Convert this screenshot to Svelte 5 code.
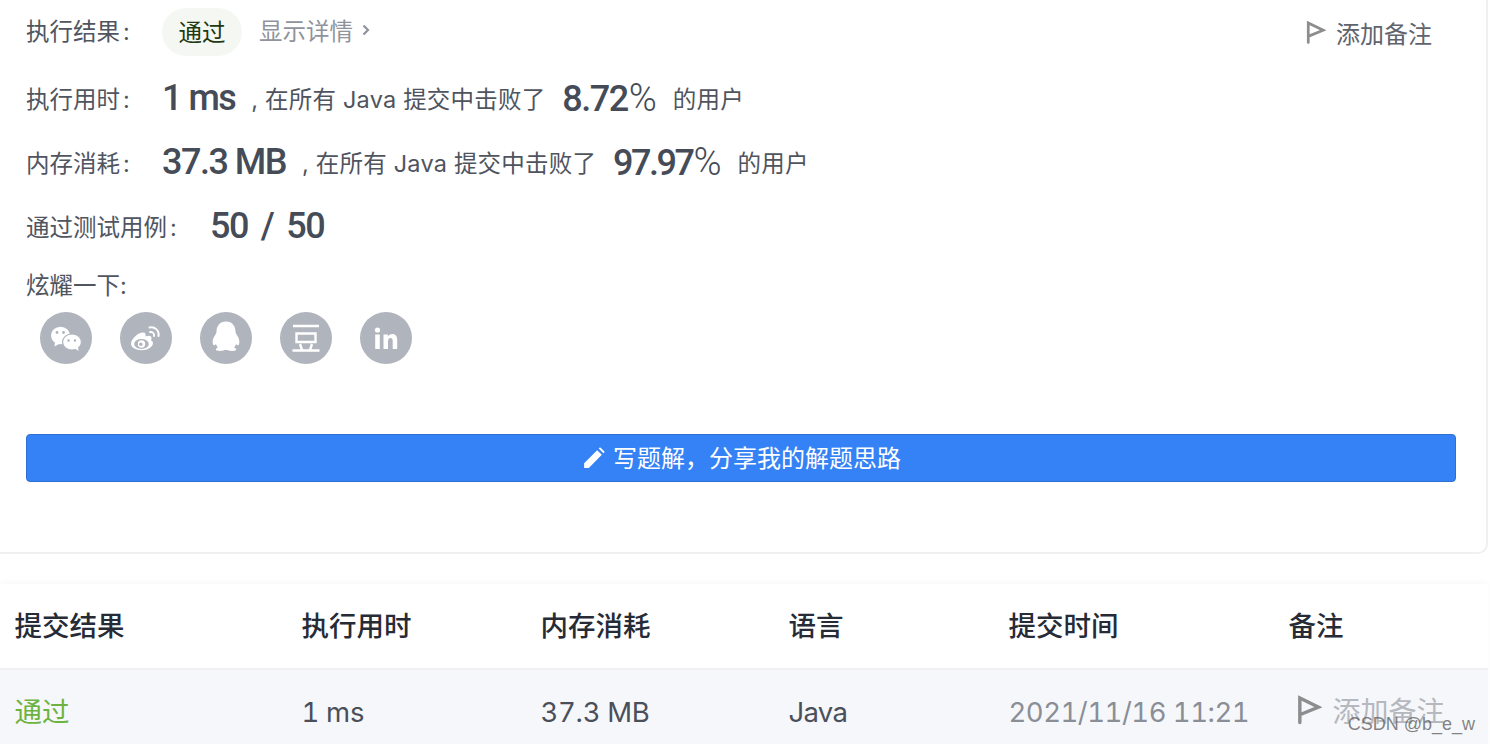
<script lang="ts">
  // 提交详情页：上方结果卡片 + 下方提交记录表
  const stats = [
    { label: "执行用时", value: "1 ms", percent: "8.72" },
    { label: "内存消耗", value: "37.3 MB", percent: "97.97" }
  ];
</script>

{#snippet flag(cls: string)}
  <svg class={cls} viewBox="0 0 22 26" aria-hidden="true">
    <path d="M2.5 24V2.5L19 10.5 3 17" fill="none" stroke="currentColor" stroke-width="3" stroke-linejoin="miter" stroke-linecap="round" />
  </svg>
{/snippet}

<div class="page">
  <section class="card">
    <div class="row result">
      <span class="label">执行结果<i>:</i></span>
      <span class="pill">通过</span>
      <span class="details">显示详情
        <svg viewBox="0 0 10 14" class="chevron"><path d="M2.5 2.5 7 7l-4.500 4.500" fill="none" stroke="currentColor" stroke-width="2.200" /></svg>
      </span>
      <span class="note">{@render flag("flag")}添加备注</span>
    </div>

    {#each stats as s}
      <div class="row stat">
        <span class="label">{s.label}<i>:</i></span>
        <strong class="big">{s.value}</strong>
        <span class="text">, 在所有 Java 提交中击败了</span>
        <strong class="big pct">{s.percent}<span class="sign">%</span></strong>
        <span class="text">的用户</span>
      </div>
    {/each}

    <div class="row cases">
      <span class="label">通过测试用例<i>:</i></span>
      <strong class="big">50 / 50</strong>
    </div>

    <div class="share-title">炫耀一下:</div>
    <div class="share">
      <span class="circle">
        <svg viewBox="0 0 52 52">
          <ellipse cx="20.500" cy="23.500" rx="9.500" ry="8.800" fill="#fff" />
          <path d="M15 30l-.5 4.500 5.500-3z" fill="#fff" />
          <ellipse cx="32" cy="30" rx="9.500" ry="8" fill="#fff" stroke="#b0b4bd" stroke-width="1.200" />
          <path d="M35 36.500l3.500 2.500-.5-4.500z" fill="#fff" />
          <circle cx="17" cy="20.500" r="1.400" fill="#b0b4bd" />
          <circle cx="23.500" cy="20.500" r="1.400" fill="#b0b4bd" />
          <circle cx="28.500" cy="28.500" r="1.200" fill="#b0b4bd" />
          <circle cx="35" cy="28.500" r="1.200" fill="#b0b4bd" />
        </svg>
      </span>
      <span class="circle">
        <svg viewBox="0 0 52 52">
          <path d="M11 32c0-5 7-11.500 12-11.500 2.500 0 3 1.700 2.500 4 3.500-1.300 6-.8 6 1.700 0 .8 0 1.300-.8 2 1.500.5 2.300 1.500 2.300 3 0 3.500-5.500 7-11 7-5.500 0-11-2.500-11-6.200z" fill="#fff" />
          <ellipse cx="21.500" cy="32" rx="7.300" ry="5" fill="#b0b4bd" />
          <circle cx="21.500" cy="32" r="3.700" fill="#fff" />
          <circle cx="20.800" cy="32.300" r="1.700" fill="#b0b4bd" />
          <path d="M29.500 15.500c5-1.500 10 3 9 8.500M30 20c2.500-.5 4.500 1.500 4 4" fill="none" stroke="#fff" stroke-width="2" stroke-linecap="round" />
        </svg>
      </span>
      <span class="circle">
        <svg viewBox="0 0 52 52">
          <path d="M26 9.500c6.500 0 9.500 5 9.500 10 0 1 .3 2 1 3 2.500 3 3.500 7 2.500 10-.5 1.200-1.800 1-3-.500-.3 1.500-1 2.500-2 3.500 1.500.5 2.500 1.500 2 2.500-.5 1-5 1.200-7.500.500-.7-.5-1.500-.6-2.500-.6s-1.800.1-2.500.6c-2.500.7-7 .5-7.500-.5-.5-1 .5-2 2-2.500-1-1-1.700-2-2-3.500-1.200 1.500-2.500 1.700-3 .5-1-3 0-7 2.500-10 .7-1 1-2 1-3 0-5 3-10 9.500-10z" fill="#fff" />
        </svg>
      </span>
      <span class="circle">
        <svg viewBox="0 0 52 52">
          <path d="M13 14h26M16.500 21.500h19v8.500h-19zM20 32l2 6M32 32l-2 6M12.500 38.500h27" fill="none" stroke="#fff" stroke-width="2.400" />
        </svg>
      </span>
      <span class="circle">
        <svg viewBox="0 0 52 52">
          <circle cx="17.500" cy="18" r="2.600" fill="#fff" />
          <path d="M15.200 22.500h4.600V37h-4.600zM23.500 22.500h4.300v2c1-1.500 2.500-2.400 4.400-2.400 3.500 0 5 2.200 5 6V37h-4.500v-8c0-2-.6-3-2.100-3s-2.600 1.200-2.600 3.200V37h-4.500z" fill="#fff" />
        </svg>
      </span>
    </div>

    <button class="solution" type="button">
      <svg viewBox="0 0 24 24" class="pencil"><path d="M3 21v-4.500L15.500 4l4.500 4.500L7.500 21zM17 2.500l1-1 .6-.1 3.900 3.900v.7l-1 1z" fill="#fff" /></svg>
      写题解，分享我的解题思路
    </button>
  </section>

  <section class="table">
    <div class="tr head">
      <span>提交结果</span><span>执行用时</span><span>内存消耗</span><span>语言</span><span>提交时间</span><span>备注</span>
    </div>
    <div class="tr body">
      <span class="ok">通过</span>
      <span class="num">1 ms</span>
      <span class="num">37.3 MB</span>
      <span class="num lang">Java</span>
      <span class="num time">2021/11/16 11:21</span>
      <span class="add">{@render flag("flag big-flag")}添加备注</span>
    </div>
  </section>

  <div class="watermark">CSDN @b_e_w</div>
</div>

<style>
  :global(body) {
    margin: 0;
    background: #fff;
  }

  .page {
    position: relative;
    width: 1490px;
    height: 744px;
    overflow: hidden;
    font-family: Inter, "Noto Sans CJK SC", sans-serif;
    color: #4a4f5a;
  }

  .card {
    box-sizing: border-box;
    width: 1488px;
    height: 554px;
    padding: 8px 54px 0 26px;
    background: #fff;
    border: 2px solid #f0f0f0;
    border-width: 0 2px 2px 0;
    border-radius: 0 0 10px 0;
  }

  .row {
    display: flex;
    align-items: center;
  }

  .label {
    width: 136px;
    font-size: 23.500px;
    color: #50555f;
    flex: none;
  }

  .label i {
    font-style: normal;
    margin-left: 3px;
  }

  .result {
    height: 48px;
  }

  .result .label {
    padding-bottom: 5px;
  }

  .pill {
    width: 80px;
    height: 48px;
    line-height: 49px;
    border-radius: 24px;
    background: #f5f8f2;
    color: #1f3a12;
    text-align: center;
    font-size: 23.500px;
  }

  .details {
    display: flex;
    align-items: center;
    margin-left: 17px;
    padding-bottom: 4px;
    font-size: 23.500px;
    color: #8f939c;
  }

  .chevron {
    width: 10px;
    height: 14px;
    margin-left: 8px;
  }

  .note {
    display: flex;
    align-items: center;
    margin-left: auto;
    font-size: 24px;
    color: #5f636d;
  }

  .flag {
    width: 20px;
    height: 25px;
    margin-right: 10px;
    color: #8d8d8d;
  }

  .big-flag {
    width: 25px;
    height: 32px;
    margin-right: 11px;
  }

  .stat {
    height: 64px;
  }

  .stat:nth-of-type(2) {
    margin-top: 10px;
  }

  .big {
    font-family: Roboto, "Noto Sans", sans-serif;
    font-size: 36px;
    font-weight: 500;
    letter-spacing: -1.500px;
    color: #454b57;
    white-space: pre;
  }

  .text {
    font-size: 23.500px;
    letter-spacing: 0.200px;
    margin-left: 16px;
    color: #4f545e;
    white-space: pre;
  }

  .pct {
    margin-left: 17px;
  }

  .stat:nth-of-type(3) .pct {
    letter-spacing: -2.500px;
  }

  .sign {
    font-weight: 300;
    font-size: 38px;
    letter-spacing: 0;
    margin-left: 1px;
  }

  .cases {
    height: 64px;
  }

  .cases .label {
    width: 184px;
  }

  .cases .big {
    word-spacing: 5.500px;
  }

  .share-title {
    margin-top: 10px;
    height: 36px;
    line-height: 36px;
    font-size: 23.500px;
    color: #50555f;
  }

  .share {
    display: flex;
    gap: 28px;
    padding: 8px 0 0 14px;
  }

  .circle {
    width: 52px;
    height: 52px;
    border-radius: 50%;
    background: #b0b4bd;
  }

  .circle svg {
    display: block;
    width: 52px;
    height: 52px;
  }

  .solution {
    display: flex;
    align-items: center;
    justify-content: center;
    box-sizing: border-box;
    width: 1430px;
    height: 48px;
    margin-top: 70px;
    padding: 0 0 4px;
    background: #3582f6;
    border: 1px solid #2f6fd0;
    border-radius: 4px;
    color: #fff;
    font: inherit;
    font-size: 24px;
  }

  .pencil {
    width: 25px;
    height: 25px;
    margin: 4px 7px 0 0;
  }

  .table {
    width: 1488px;
    margin-top: 30px;
    box-shadow: 0 -2px 6px rgba(0, 0, 0, 0.03);
  }

  .tr {
    display: grid;
    grid-template-columns: 287px 239px 248px 220px 280px 1fr;
    align-items: center;
    padding-left: 14.500px;
  }

  .head {
    height: 86px;
    border-bottom: 2px solid #f0f0f0;
    padding-bottom: 4px;
    box-sizing: border-box;
    font-size: 27.500px;
    font-weight: 500;
    color: #262b36;
    background: #fff;
  }

  .body {
    height: 80px;
    background: #f6f7fa;
    font-size: 27.500px;
    color: #4a4f5a;
    padding-bottom: 2px;
  }

  .ok {
    color: #6cb33f;
  }

  .num {
    font-variant-numeric: tabular-nums;
    letter-spacing: -0.300px;
    padding-top: 4px;
  }

  .lang {
    letter-spacing: -0.700px;
  }

  .time {
    color: #8a8e97;
    letter-spacing: -0.500px;
  }

  .add {
    display: flex;
    align-items: center;
    color: #b5b8be;
    margin-left: 8px;
    font-size: 28px;
  }

  .watermark {
    position: absolute;
    right: 15px;
    top: 714px;
    font-family: "Liberation Sans", sans-serif;
    font-size: 18px;
    color: rgba(90, 90, 90, 0.75);
  }
</style>
